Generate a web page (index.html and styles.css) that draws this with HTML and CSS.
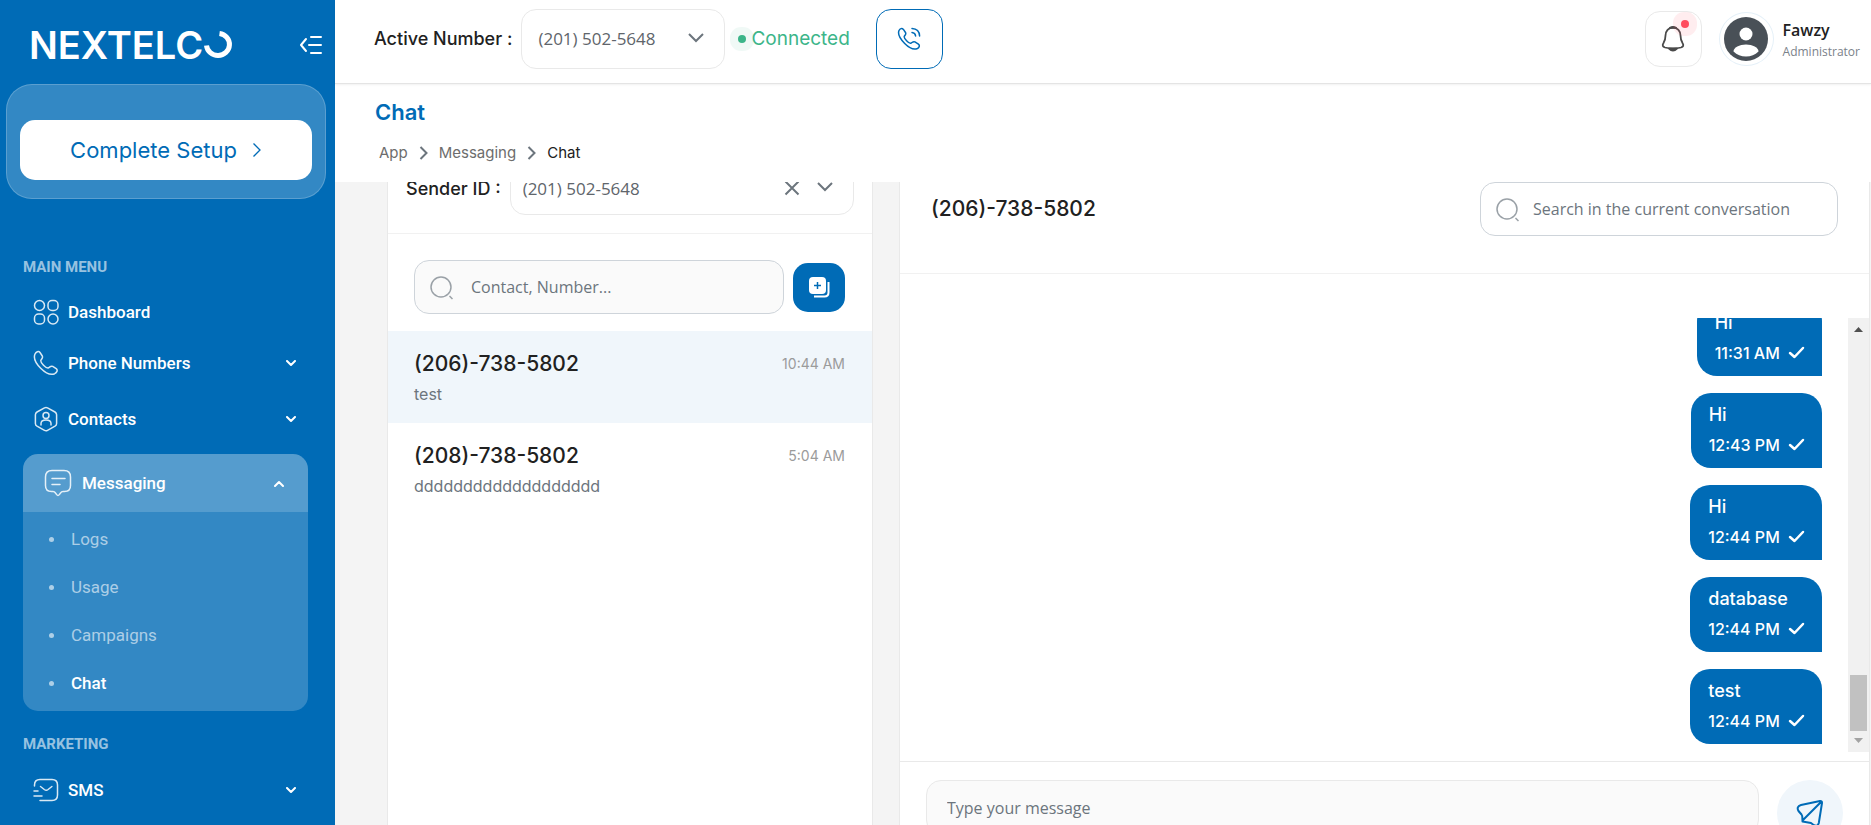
FILE: index.html
```html
<!DOCTYPE html>
<html lang="en">
<head>
  <meta charset="UTF-8">
  <meta name="viewport" content="width=device-width, initial-scale=1.0">
  <title>Nextelco - Chat</title>
  <link rel="stylesheet" href="styles.css">
</head>
<body>
  <aside class="sidebar">
    <div class="brand">
      <a href="#" class="logo" aria-label="Nextelco">
        <span>NEXTELC</span>
        <svg width="30" height="28" viewBox="0 0 30 28" fill="none" stroke="#fff" stroke-width="5"><path d="M3.500 14.500a11.500 11 0 1 0 13-12"/></svg>
      </a>
      <button type="button" class="toggle" aria-label="Collapse menu">
        <svg width="24" height="20" viewBox="0 0 24 20" fill="none" stroke="#fff" stroke-width="2" stroke-linecap="round" stroke-linejoin="round"><path d="M7 4L2 10l5 6M12 2h10M10 10h12M12 18h10"/></svg>
      </button>
    </div>

    <div class="setup">
      <button type="button" class="setup-btn">Complete Setup
        <svg width="10" height="16" viewBox="0 0 10 16" fill="none" stroke="currentColor" stroke-width="1.300"><path d="M1.500 1.500L8 8l-6.500 6.500"/></svg>
      </button>
    </div>

    <nav class="menu">
      <h2 class="menu-title">MAIN MENU</h2>
      <a href="#" class="menu-item first">
        <svg class="icon" viewBox="0 0 26 26"><circle cx="6.500" cy="6.500" r="5"/><rect x="15" y="1.500" width="10" height="10" rx="4"/><rect x="1.500" y="15" width="10" height="10" rx="4"/><circle cx="20" cy="20" r="5"/></svg>
        <span>Dashboard</span>
      </a>
      <a href="#" class="menu-item">
        <svg class="icon" viewBox="0 0 26 26"><path d="M2 4c1-2 3.500-3.500 5-1.500l2.300 3.500c1 1.800-.8 3-1.400 4.200-.6 1.500 1 3.400 2.600 5s3.500 3.200 5 2.600c1.200-.6 2.400-2.400 4.200-1.400l3.500 2.300c2 1.500.5 4-1.500 5-3.500 1.500-9-.5-14-5.500S.5 7.500 2 4z"/></svg>
        <span>Phone Numbers</span>
        <svg class="caret" viewBox="0 0 10 7"><path d="M1 1l4 4 4-4"/></svg>
      </a>
      <a href="#" class="menu-item">
        <svg class="icon" viewBox="0 0 26 26"><path d="M11.500 1.800q1.500-.8 3 0l7.500 4.200q1.600 1 1.600 2.800v8.600q0 1.800-1.600 2.800l-7.500 4.200q-1.500.8-3 0L4 20.200q-1.600-1-1.600-2.800V8.800Q2.400 7 4 6z"/><circle cx="13" cy="9.500" r="3"/><path d="M8 19v-1.500c0-2 2-3.500 5-3.500s5 1.500 5 3.500V19"/></svg>
        <span>Contacts</span>
        <svg class="caret" viewBox="0 0 10 7"><path d="M1 1l4 4 4-4"/></svg>
      </a>

      <div class="submenu">
        <a href="#" class="submenu-head">
          <svg class="icon big" viewBox="0 0 28 28"><path d="M8 1.500h12q6.500 0 6.500 6.500v8.500q0 6-6 6h-1.500q-1.500 0-2.500 1.500l-1.200 1.600q-1.300 1.700-2.600 0L11.500 24q-1-1.500-2.500-1.500H7.500q-6 0-6-6V8Q1.500 1.500 8 1.500zM8 9.500h13M8 15.500h8"/></svg>
          <span>Messaging</span>
          <svg class="caret" viewBox="0 0 10 7"><path d="M1 6l4-4 4 4"/></svg>
        </a>
        <ul>
          <li><a href="#">Logs</a></li>
          <li><a href="#">Usage</a></li>
          <li><a href="#">Campaigns</a></li>
          <li><a href="#" class="active">Chat</a></li>
        </ul>
      </div>

      <h2 class="menu-title">MARKETING</h2>
      <a href="#" class="menu-item">
        <svg class="icon" viewBox="0 0 26 26"><path d="M1.500 9V8q0-5.500 5.500-5.500h12q5.500 0 5.500 5.500v10q0 5.500-5.500 5.500H7M7.500 9.500l3.800 3q1.900 1.400 3.800 0l3.800-3M1 14h4M1 19h8"/></svg>
        <span>SMS</span>
        <svg class="caret" viewBox="0 0 10 7"><path d="M1 1l4 4 4-4"/></svg>
      </a>
    </nav>
  </aside>

  <main class="main">
    <header class="topbar">
      <label for="active-number" class="field-label">Active Number :</label>
      <div class="select-box">
        <select id="active-number">
          <option>(201) 502-5648</option>
        </select>
        <svg class="select-arrow" viewBox="0 0 18 12"><path d="M2 2l7 7 7-7"/></svg>
      </div>
      <span class="status"><i class="status-dot"></i>Connected</span>
      <button type="button" class="call-btn" aria-label="Call">
        <svg width="24" height="24" viewBox="0 0 24 24" fill="none" stroke="currentColor" stroke-width="1.500" stroke-linecap="round" stroke-linejoin="round"><path d="M2 3.500C3 1.500 5 .8 6.400 2.400L8.500 5.500c1 1.600-.6 2.700-1.200 3.800-.6 1.300.9 3 2.300 4.500s3.200 2.900 4.500 2.300c1.100-.6 2.200-2.200 3.800-1.200l3.500 2.300c1.700 1.300.8 3.300-1 4.300-3.200 1.500-8.200-.5-12.700-5S.7 6.700 2 3.500zM15 5.500c2 .2 3.400 1.500 3.600 3.500M15 1.500c4.500.2 7.400 3 7.600 7.500"/></svg>
      </button>
      <div class="user-area">
        <button type="button" class="bell" aria-label="Notifications">
          <svg width="24" height="28" viewBox="0 0 24 28" fill="none" stroke="#4a4a4a" stroke-width="1.800" stroke-linejoin="round"><path d="M12 2.500c-4.500 0-7.500 3.500-7.500 8 0 4-.5 5-2 7.500-1.500 2.300-.8 3.800 1.500 4.500 5 1.300 11 1.300 16 0 2.300-.7 3-2.200 1.500-4.500-1.500-2.500-2-3.500-2-7.500 0-4.500-3-8-7.500-8z"/><path d="M9 2.800q3-2 6 0zM8 23.500q4 4 8 0z" fill="#777"/></svg>
          <i class="bell-dot"></i>
        </button>
        <div class="avatar">
          <svg width="44" height="44" viewBox="0 0 44 44"><circle cx="22" cy="22" r="22" fill="#495057"/><circle cx="22" cy="17" r="6.500" fill="#fff"/><path d="M9.500 34.500c0-4 6-7 12.500-7s12.500 3 12.500 7C31 38 27 39.500 22 39.500S13 38 9.500 34.500z" fill="#fff"/></svg>
        </div>
        <div class="user">
          <strong>Fawzy</strong>
          <span>Administrator</span>
        </div>
      </div>
    </header>

    <section class="page-head">
      <h1>Chat</h1>
      <nav class="breadcrumb" aria-label="Breadcrumb">
        <a href="#">App</a>
        <svg viewBox="0 0 9 14"><path d="M1.500 1l6 6-6 6"/></svg>
        <a href="#">Messaging</a>
        <svg viewBox="0 0 9 14"><path d="M1.500 1l6 6-6 6"/></svg>
        <span>Chat</span>
      </nav>
    </section>

    <div class="content">
      <section class="panel contacts">
        <div class="sender">
          <label for="sender-id" class="field-label">Sender ID :</label>
          <div class="select-box">
            <select id="sender-id">
              <option>(201) 502-5648</option>
            </select>
            <button type="button" class="clear" aria-label="Clear">
              <svg width="16" height="16" viewBox="0 0 16 16"><path d="M1.500 1.500l13 13M14.500 1.500l-13 13"/></svg>
            </button>
            <svg class="select-arrow" viewBox="0 0 18 12"><path d="M2 2l7 7 7-7"/></svg>
          </div>
        </div>
        <div class="find">
          <div class="search">
            <svg viewBox="0 0 24 24"><circle cx="11" cy="11" r="10"/><path d="M19.500 20l3 3"/></svg>
            <input type="search" placeholder="Contact, Number..." aria-label="Contact, Number">
          </div>
          <button type="button" class="new-chat" aria-label="New conversation">
            <svg width="22" height="22" viewBox="0 0 22 22"><rect x="1" y="1" width="17" height="17" rx="4" fill="#fff"/><path d="M20.500 6v10.500q0 4-4 4H6" fill="none" stroke="#fff" stroke-width="2"/><path d="M9.500 6v7M6 9.500h7" stroke="#006bb6" stroke-width="1.500"/></svg>
          </button>
        </div>
        <ul class="threads">
          <li class="selected">
            <a href="#">
              <span class="phone">(206)-738-5802</span>
              <time>10:44 AM</time>
              <span class="preview">test</span>
            </a>
          </li>
          <li>
            <a href="#">
              <span class="phone">(208)-738-5802</span>
              <time>5:04 AM</time>
              <span class="preview">ddddddddddddddddddd</span>
            </a>
          </li>
        </ul>
      </section>

      <section class="panel conversation">
        <div class="conversation-head">
          <h2 class="phone">(206)-738-5802</h2>
          <div class="search">
            <svg viewBox="0 0 24 24"><circle cx="11" cy="11" r="10"/><path d="M19.500 20l3 3"/></svg>
            <input type="search" placeholder="Search in the current conversation" aria-label="Search in the current conversation">
          </div>
        </div>
        <div class="messages">
          <div class="message-list">
            <div class="bubble">Hi<div>11:31 AM <svg viewBox="0 0 17 13"><path d="M2 7l4.500 4L15 2"/></svg></div></div>
            <div class="bubble">Hi<div>12:43 PM <svg viewBox="0 0 17 13"><path d="M2 7l4.500 4L15 2"/></svg></div></div>
            <div class="bubble">Hi<div>12:44 PM <svg viewBox="0 0 17 13"><path d="M2 7l4.500 4L15 2"/></svg></div></div>
            <div class="bubble">database<div>12:44 PM <svg viewBox="0 0 17 13"><path d="M2 7l4.500 4L15 2"/></svg></div></div>
            <div class="bubble">test<div>12:44 PM <svg viewBox="0 0 17 13"><path d="M2 7l4.500 4L15 2"/></svg></div></div>
          </div>
          <div class="scrollbar">
            <svg width="21" height="21" viewBox="0 0 21 21"><path d="M6 14h9l-4.500-5z" fill="#505050"/></svg>
            <div class="thumb"></div>
            <svg width="21" height="21" viewBox="0 0 21 21"><path d="M6 7h9l-4.500 5z" fill="#a3a3a3"/></svg>
          </div>
        </div>
        <form class="composer">
          <input type="text" placeholder="Type your message" aria-label="Type your message">
          <button type="button" class="send" aria-label="Send">
            <svg width="28" height="28" viewBox="0 0 28 28" fill="none" stroke="#006bb6" stroke-width="2" stroke-linecap="round" stroke-linejoin="round"><path d="M24 2L5 6C1.500 7 1 9.500 2.500 12l3 3.500q.8 1 .8 2.500l.2 4.500L15 24l3 2.200c2.300 1.300 4 .3 4.800-2.200L26 4q.2-2.200-2-2zM25 3L6.500 21.500"/></svg>
          </button>
        </form>
      </section>
    </div>
  </main>
</body>
</html>
```

FILE: styles.css
```css
* {
  box-sizing: border-box;
}

body {
  margin: 0;
  display: flex;
  height: 100vh;
  overflow: hidden;
  font-family: Inter, sans-serif;
  font-size: 16px;
  color: #212121;
  background: #f4f4f4;
}

a {
  color: inherit;
  text-decoration: none;
}

button {
  padding: 0;
  border: none;
  background: none;
  font: inherit;
  cursor: pointer;
}

h1, h2, ul {
  margin: 0;
  padding: 0;
}

ul {
  list-style: none;
}

/* Sidebar */
.sidebar {
  flex: 0 0 335px;
  background: #006bb6;
  color: #fff;
  overflow: hidden;
}

.brand {
  display: flex;
  align-items: center;
  justify-content: space-between;
  height: 84px;
  padding: 5px 12px 0 29px;
}

.logo {
  display: flex;
  align-items: center;
  font-size: 38px;
  font-weight: 600;
  line-height: 38px;
}

.toggle svg,
.setup-btn svg,
.call-btn svg,
.bell svg,
.avatar svg {
  display: block;
}

.setup {
  margin: 0 9px 0 6px;
  padding: 35px 13px 18px;
  border: 1px solid rgba(255, 255, 255, 0.2);
  border-radius: 26px;
  background: rgba(255, 255, 255, 0.2);
}

.setup-btn {
  display: flex;
  align-items: center;
  justify-content: center;
  gap: 15px;
  width: 100%;
  height: 60px;
  border-radius: 15px;
  background: #fff;
  color: #006bb6;
  font-size: 22px;
}

.menu {
  padding: 57px 27px 0 23px;
  font-family: Roboto, sans-serif;
  font-size: 17px;
  font-weight: 500;
}

.menu-title {
  height: 22px;
  margin-bottom: 7px;
  line-height: 22px;
  font-size: 15px;
  font-weight: 700;
  color: rgba(255, 255, 255, 0.6);
}

.menu-item {
  display: flex;
  align-items: center;
  gap: 9px;
  height: 56px;
  padding: 0 12px 0 10px;
}

.menu-item.first {
  height: 46px;
  margin-top: 11px;
}

.icon {
  width: 26px;
  height: 26px;
  fill: none;
  stroke: rgba(255, 255, 255, 0.85);
  stroke-width: 1.5;
  stroke-linecap: round;
  stroke-linejoin: round;
}

.icon.big {
  width: 28px;
  height: 28px;
}

.caret {
  width: 10px;
  height: 7px;
  margin-left: auto;
  fill: none;
  stroke: #fff;
  stroke-width: 2;
  stroke-linecap: round;
  stroke-linejoin: round;
}

.submenu {
  margin: 7px 0 22px;
  border-radius: 15px;
  background: rgba(255, 255, 255, 0.2);
  overflow: hidden;
}

.submenu-head {
  display: flex;
  align-items: center;
  gap: 10px;
  height: 58px;
  padding: 0 24px 0 21px;
  background: rgba(255, 255, 255, 0.17);
}

.submenu ul {
  padding: 3px 0 4px;
}

.submenu li a {
  display: flex;
  align-items: center;
  height: 48px;
  padding-left: 26px;
  font-weight: 400;
  color: rgba(255, 255, 255, 0.6);
}

.submenu li a::before {
  content: "";
  width: 5px;
  height: 5px;
  margin-right: 17px;
  border-radius: 50%;
  background: rgba(255, 255, 255, 0.6);
}

.submenu li a.active {
  font-weight: 500;
  color: #fff;
}

/* Top bar */
.main {
  flex: 1;
  min-width: 0;
  display: flex;
  flex-direction: column;
}

.topbar {
  display: flex;
  align-items: center;
  flex: 0 0 84px;
  padding: 0 11px 6px 39px;
  background: #fff;
  border-bottom: 1px solid #e4e4e4;
  box-shadow: 0 1px 2px rgba(0, 0, 0, 0.06);
  z-index: 1;
}

.field-label {
  font-size: 18px;
  font-weight: 500;
  white-space: nowrap;
}

.select-box {
  position: relative;
  width: 204px;
  margin-left: 9px;
}

.select-box select {
  appearance: none;
  width: 100%;
  height: 60px;
  padding: 0 16px;
  border: 1px solid #e9e9e9;
  border-radius: 15px;
  background: #fff;
  font-family: "Open Sans", sans-serif;
  font-size: 17px;
  color: #60656b;
}

.select-arrow {
  position: absolute;
  top: calc(50% - 7px);
  right: 20px;
  width: 18px;
  height: 12px;
  pointer-events: none;
}

.select-arrow,
.clear svg,
.breadcrumb svg {
  fill: none;
  stroke: #6c757d;
  stroke-width: 2;
}

.status {
  display: flex;
  align-items: center;
  margin-left: 4px;
  font-size: 19px;
  color: #3cb589;
}

.status-dot {
  width: 8px;
  height: 8px;
  margin: 0 5px 0 9px;
  border-radius: 50%;
  background: #3cb589;
  box-shadow: 0 0 0 8px rgba(60, 181, 137, 0.08);
}

.call-btn {
  display: grid;
  place-items: center;
  width: 67px;
  height: 60px;
  margin-left: 26px;
  border: 1px solid #006bb6;
  border-radius: 15px;
  color: #006bb6;
}

.user-area {
  display: flex;
  align-items: center;
  margin-left: auto;
}

.bell {
  position: relative;
  display: grid;
  place-items: center;
  width: 57px;
  height: 56px;
  border: 1px solid #e9e9e9;
  border-radius: 15px;
}

.bell-dot {
  position: absolute;
  top: 8px;
  right: 12px;
  width: 8px;
  height: 8px;
  border-radius: 50%;
  background: #ff4d5e;
  box-shadow: 0 0 0 8px rgba(255, 77, 94, 0.1);
}

.avatar {
  display: grid;
  place-items: center;
  width: 55px;
  height: 54px;
  margin: 0 9px 0 17px;
  border: 1px solid #e5f0f8;
  border-radius: 50%;
}

.user {
  display: flex;
  flex-direction: column;
  padding-top: 4px;
  font-family: "Open Sans", sans-serif;
}

.user strong {
  font-size: 16px;
  font-weight: 600;
  line-height: 22px;
}

.user span {
  font-size: 12px;
  line-height: 22px;
  color: #7b828a;
}

/* Page title */
.page-head {
  flex: 0 0 98px;
  padding: 14px 40px 0;
  background: #fff;
}

.page-head h1 {
  font-size: 22px;
  font-weight: 600;
  line-height: 28px;
  color: #006bb6;
}

.breadcrumb {
  display: flex;
  align-items: center;
  gap: 11px;
  margin-top: 14px;
  padding-left: 4px;
  font-size: 15px;
  line-height: 26px;
  color: #6d6d6d;
}

.breadcrumb svg {
  width: 9px;
  height: 14px;
}

.breadcrumb span {
  color: #212121;
}

/* Chat panels */
.content {
  flex: 1;
  min-height: 0;
  display: flex;
  gap: 26px;
  padding: 0 1px 0 52px;
  overflow: hidden;
}

.panel {
  background: #fff;
  border: solid #e9e9e9;
  border-width: 0 1px;
}

.contacts {
  flex: 0 0 486px;
}

.sender {
  display: flex;
  align-items: center;
  height: 78px;
  margin-top: -26px;
  padding: 0 18px 13px;
  border-bottom: 1px solid #f1f1f1;
}

.sender .select-box {
  flex: 1;
}

.sender select {
  height: 54px;
  padding: 0 12px;
}

.clear {
  position: absolute;
  top: calc(50% - 8px);
  right: 54px;
  width: 16px;
  height: 16px;
}

.clear svg {
  display: block;
}

.find {
  display: flex;
  align-items: center;
  gap: 9px;
  padding: 26px 27px 17px 26px;
}

.search {
  position: relative;
  flex: 1;
}

.search svg {
  position: absolute;
  top: 16px;
  left: 16px;
  width: 24px;
  height: 24px;
  fill: none;
  stroke: #9aa1a7;
  stroke-width: 1.5;
}

.search input {
  display: block;
  width: 100%;
  height: 54px;
  padding: 0 16px 0 56px;
  border: 1px solid #ced4da;
  border-radius: 15px;
  background: #fafafa;
}

input {
  font-family: "Open Sans", sans-serif;
  font-size: 16px;
  color: #212121;
}

input::placeholder {
  color: #6c757d;
  opacity: 1;
}

.new-chat {
  display: grid;
  place-items: center;
  width: 52px;
  height: 49px;
  border-radius: 15px;
  background: #006bb6;
}

.threads a {
  display: grid;
  grid-template-columns: 1fr auto;
  height: 92px;
  padding: 17px 27px 0 26px;
  align-content: start;
  line-height: 32px;
}

.threads .selected {
  background: #f0f6fb;
}

.phone {
  font-size: 21px;
  font-weight: 500;
}

.threads time {
  font-size: 14px;
  color: #9b9b9b;
}

.threads .preview {
  grid-column: 1 / -1;
  line-height: 28px;
  color: #6c757d;
}

.conversation {
  flex: 1;
  min-width: 0;
}

.conversation-head {
  display: flex;
  align-items: center;
  justify-content: space-between;
  height: 92px;
  padding: 0 31px 38px;
  border-bottom: 1px solid #f1f1f1;
}

.conversation-head .search {
  flex: 0 0 358px;
}

.conversation-head input {
  padding-left: 52px;
  background: #fff;
}

.messages {
  display: flex;
  height: calc(100vh - 391px);
  margin: 44px 0 9px;
}

.message-list {
  flex: 1;
  display: flex;
  flex-direction: column;
  align-items: flex-end;
  justify-content: flex-end;
  gap: 17px;
  padding: 0 26px 8px;
  overflow: hidden;
}

.bubble {
  flex: none;
  padding: 7px 17px 8px 18px;
  border-radius: 20px 20px 0 20px;
  background: #006bb6;
  color: #fff;
  font-size: 18px;
  font-weight: 500;
  line-height: 30px;
}

.bubble div {
  font-size: 16px;
}

.bubble svg {
  width: 17px;
  height: 13px;
  margin-left: 4px;
  fill: none;
  stroke: #fff;
  stroke-width: 2.5;
  stroke-linecap: round;
  stroke-linejoin: round;
}

.scrollbar {
  display: flex;
  flex-direction: column;
  width: 21px;
  background: #f1f1f1;
}

.thumb {
  height: 56px;
  margin: auto 2px 0;
  background: #c1c1c1;
}

.composer {
  display: flex;
  gap: 18px;
  padding: 18px 26px;
  border-top: 1px solid #e9e9e9;
}

.composer input {
  flex: 1;
  height: 55px;
  padding: 0 20px;
  border: 1px solid #e9e9e9;
  border-radius: 15px;
  background: #fafafa;
}

.send {
  display: grid;
  place-items: center;
  width: 66px;
  height: 66px;
  border-radius: 50%;
  background: #f0f6fb;
}
```
